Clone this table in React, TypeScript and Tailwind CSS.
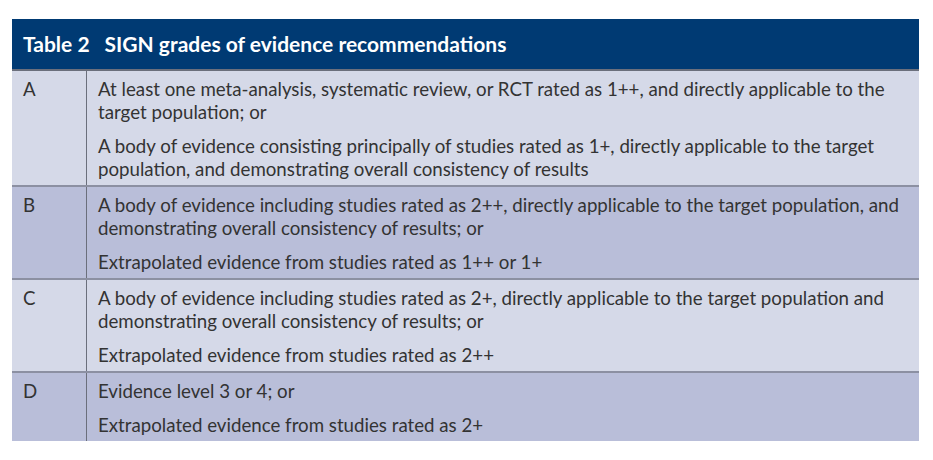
const rows = [
  {
    grade: "A",
    dark: false,
    items: [
      "At least one meta-analysis, systematic review, or RCT rated as 1++, and directly applicable to the target population; or",
      "A body of evidence consisting principally of studies rated as 1+, directly applicable to the target population, and demonstrating overall consistency of results",
    ],
  },
  {
    grade: "B",
    dark: true,
    items: [
      "A body of evidence including studies rated as 2++, directly applicable to the target population, and demonstrating overall consistency of results; or",
      "Extrapolated evidence from studies rated as 1++ or 1+",
    ],
  },
  {
    grade: "C",
    dark: false,
    items: [
      "A body of evidence including studies rated as 2+, directly applicable to the target population and demonstrating overall consistency of results; or",
      "Extrapolated evidence from studies rated as 2++",
    ],
  },
  {
    grade: "D",
    dark: true,
    items: ["Evidence level 3 or 4; or", "Extrapolated evidence from studies rated as 2+"],
  },
];

export default function App() {
  return (
    <div className="w-[933px] h-[460px] bg-white pt-[19px] pl-[12px] font-['Lato',sans-serif]">
      <div className="w-[907px]">
        <div className="h-[52px] bg-[#003a73] flex items-center gap-[15px] px-[11px] border-b-2 border-[#6b6f7c] text-white font-bold text-[21px]">
          <span>Table 2</span>
          <span>SIGN grades of evidence recommendations</span>
        </div>
        {rows.map((r, i) => (
          <div
            key={r.grade}
            className={`flex ${r.dark ? "bg-[#b9bed9]" : "bg-[#d5d9e8]"} ${i < rows.length - 1 ? "border-b-2 border-[#8c90a2]" : ""}`}
          >
            <div className="w-[75px] shrink-0 border-r border-[#6b6f7c] pl-[11px] pt-[7px] text-[18.7px] leading-[23px] text-[#333]">
              {r.grade}
            </div>
            <div className="flex-1 pl-[11px] pr-[12px] pt-[7px] pb-[4px] flex flex-col gap-[11px] text-[18.7px] leading-[23px] text-[#333]">
              {r.items.map((t) => (
                <p key={t}>{t}</p>
              ))}
            </div>
          </div>
        ))}
      </div>
    </div>
  );
}
